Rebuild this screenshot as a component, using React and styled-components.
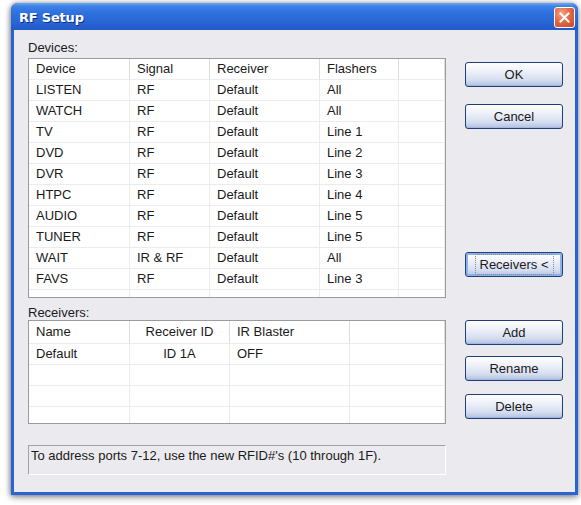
import React from "react";
import styled, { createGlobalStyle } from "styled-components";

const Global = createGlobalStyle`
  html, body { margin: 0; padding: 0; background: #ffffff; }
  body { font-family: "Liberation Sans", Arial, sans-serif; font-size: 13px; color: #000; }
`;

const Page = styled.div`
  width: 581px;
  height: 505px;
  padding: 3px 0 0 11px;
  box-sizing: border-box;
`;

const Window = styled.div`
  width: 567px;
  height: 492px;
  box-sizing: border-box;
  display: flex;
  flex-direction: column;
  background: #2b62d4;
  border-radius: 7px 7px 0 0;
  box-shadow: 0 2px 7px rgba(0, 0, 0, 0.45), -1px 0 4px rgba(0, 0, 0, 0.25);
  overflow: hidden;
`;

const TitleBar = styled.div`
  height: 27px;
  flex: none;
  display: flex;
  align-items: center;
  justify-content: space-between;
  padding: 0 3px 0 8px;
  background: linear-gradient(180deg, #6fa6f3 0%, #3d81e8 12%, #2d6fdd 40%, #2966d6 70%, #2259c8 100%);
`;

const Title = styled.span`
  color: #fff;
  font-weight: bold;
  font-size: 13px;
  font-family: "DejaVu Sans", "Liberation Sans", sans-serif;
  letter-spacing: -0.2px;
  text-shadow: 1px 1px 0 #0f2f7a;
  margin-top: 1px;
`;

const CloseBtn = styled.div`
  width: 19px;
  height: 19px;
  border: 1px solid #fff;
  border-radius: 3px;
  background: radial-gradient(circle at 35% 30%, #f3a48a 0%, #e26a45 45%, #c9442a 100%);
  display: flex;
  align-items: center;
  justify-content: center;
  margin-top: 1px;
`;

const Client = styled.div`
  flex: 1;
  margin: 0 3px 3px 3px;
  background: #ebeaee;
  display: flex;
  padding: 0 0 0 14px;
  gap: 19px;
`;

const LeftCol = styled.div`
  width: 418px;
  display: flex;
  flex-direction: column;
`;

const Label = styled.div`
  line-height: 15px;
  margin-top: ${(p) => p.$top}px;
  margin-bottom: ${(p) => p.$bottom}px;
  color: #1a1a1a;
`;

const ListBox = styled.div`
  height: ${(p) => p.$h}px;
  box-sizing: border-box;
  border: 1px solid #9b9b9b;
  background: #fff;
  overflow: hidden;
`;

const Grid = styled.div`
  display: grid;
  grid-template-columns: ${(p) => p.$cols};
`;

const HeadCell = styled.div`
  height: ${(p) => p.$h || 20}px;
  line-height: ${(p) => p.$h || 20}px;
  padding: 0 7px;
  border-right: 1px solid #dedede;
  border-bottom: 1px solid #ececec;
  text-align: ${(p) => (p.$center ? "center" : "left")};
  white-space: nowrap;
  color: #1a1a1a;
`;

const Cell = styled.div`
  height: 20px;
  line-height: 20px;
  padding: 0 7px;
  border-right: 1px solid #ececec;
  border-bottom: 1px solid #ececec;
  text-align: ${(p) => (p.$center ? "center" : "left")};
  white-space: nowrap;
  color: #1a1a1a;
`;

const Status = styled.div`
  margin-top: 21px;
  height: 30px;
  box-sizing: border-box;
  border-top: 1px solid #a3a3a3;
  border-left: 1px solid #a3a3a3;
  border-right: 1px solid #fff;
  border-bottom: 1px solid #fff;
  padding: 2px 2px;
  line-height: 15px;
  color: #1a1a1a;
`;

const RightCol = styled.div`
  display: flex;
  flex-direction: column;
`;

const Button = styled.div`
  margin-top: ${(p) => p.$top}px;
  width: 98px;
  height: 25px;
  box-sizing: border-box;
  border: 1px solid #1f3f78;
  border-radius: 3px;
  background: linear-gradient(180deg, #ffffff 0%, #eef1f8 35%, #d5ddef 75%, #b0c0e2 100%);
  display: flex;
  align-items: center;
  justify-content: center;
  color: #1a1a1a;
  box-shadow: ${(p) =>
    p.$focus ? "inset 0 0 0 2px #8db2ea" : "inset 0 -1px 0 #a7b7dc"};
`;

const FocusRect = styled.span`
  padding: 1px 3px;
  outline: 1px dotted #8a8a8a;
  outline-offset: 1px;
`;

const devCols = "101px 80px 110px 79px 1fr";
const recCols = "101px 100px 120px 1fr";

const devices = [
  ["LISTEN", "RF", "Default", "All"],
  ["WATCH", "RF", "Default", "All"],
  ["TV", "RF", "Default", "Line 1"],
  ["DVD", "RF", "Default", "Line 2"],
  ["DVR", "RF", "Default", "Line 3"],
  ["HTPC", "RF", "Default", "Line 4"],
  ["AUDIO", "RF", "Default", "Line 5"],
  ["TUNER", "RF", "Default", "Line 5"],
  ["WAIT", "IR & RF", "Default", "All"],
  ["FAVS", "RF", "Default", "Line 3"],
  ["", "", "", ""],
];

const receivers = [
  ["Default", "ID 1A", "OFF"],
  ["", "", ""],
  ["", "", ""],
  ["", "", ""],
];

export default function App() {
  return (
    <Page>
      <Global />
      <Window>
        <TitleBar>
          <Title>RF Setup</Title>
          <CloseBtn>
            <svg width="11" height="11" viewBox="0 0 11 11">
              <path d="M1.5 1.5 L9.5 9.5 M9.5 1.5 L1.5 9.5" stroke="#fff" strokeWidth="2" strokeLinecap="square" />
            </svg>
          </CloseBtn>
        </TitleBar>
        <Client>
          <LeftCol>
            <Label $top={10} $bottom={3}>Devices:</Label>
            <ListBox $h={240}>
              <Grid $cols={devCols}>
                <HeadCell>Device</HeadCell>
                <HeadCell>Signal</HeadCell>
                <HeadCell>Receiver</HeadCell>
                <HeadCell>Flashers</HeadCell>
                <HeadCell />
                {devices.map((r, i) => (
                  <React.Fragment key={i}>
                    {r.map((c, j) => (
                      <Cell key={j}>{c}</Cell>
                    ))}
                    <Cell />
                  </React.Fragment>
                ))}
              </Grid>
            </ListBox>
            <Label $top={7} $bottom={0}>Receivers:</Label>
            <ListBox $h={104}>
              <Grid $cols={recCols}>
                <HeadCell $h={22}>Name</HeadCell>
                <HeadCell $h={22} $center>Receiver ID</HeadCell>
                <HeadCell $h={22}>IR Blaster</HeadCell>
                <HeadCell $h={22} />
                {receivers.map((r, i) => (
                  <React.Fragment key={i}>
                    <Cell>{r[0]}</Cell>
                    <Cell $center>{r[1]}</Cell>
                    <Cell>{r[2]}</Cell>
                    <Cell />
                  </React.Fragment>
                ))}
              </Grid>
            </ListBox>
            <Status>To address ports 7-12, use the new RFID#'s (10 through 1F).</Status>
          </LeftCol>
          <RightCol>
            <Button $top={32}>OK</Button>
            <Button $top={17}>Cancel</Button>
            <Button $top={123} $focus>
              <FocusRect>Receivers &lt;</FocusRect>
            </Button>
            <Button $top={43}>Add</Button>
            <Button $top={11}>Rename</Button>
            <Button $top={13}>Delete</Button>
          </RightCol>
        </Client>
      </Window>
    </Page>
  );
}
